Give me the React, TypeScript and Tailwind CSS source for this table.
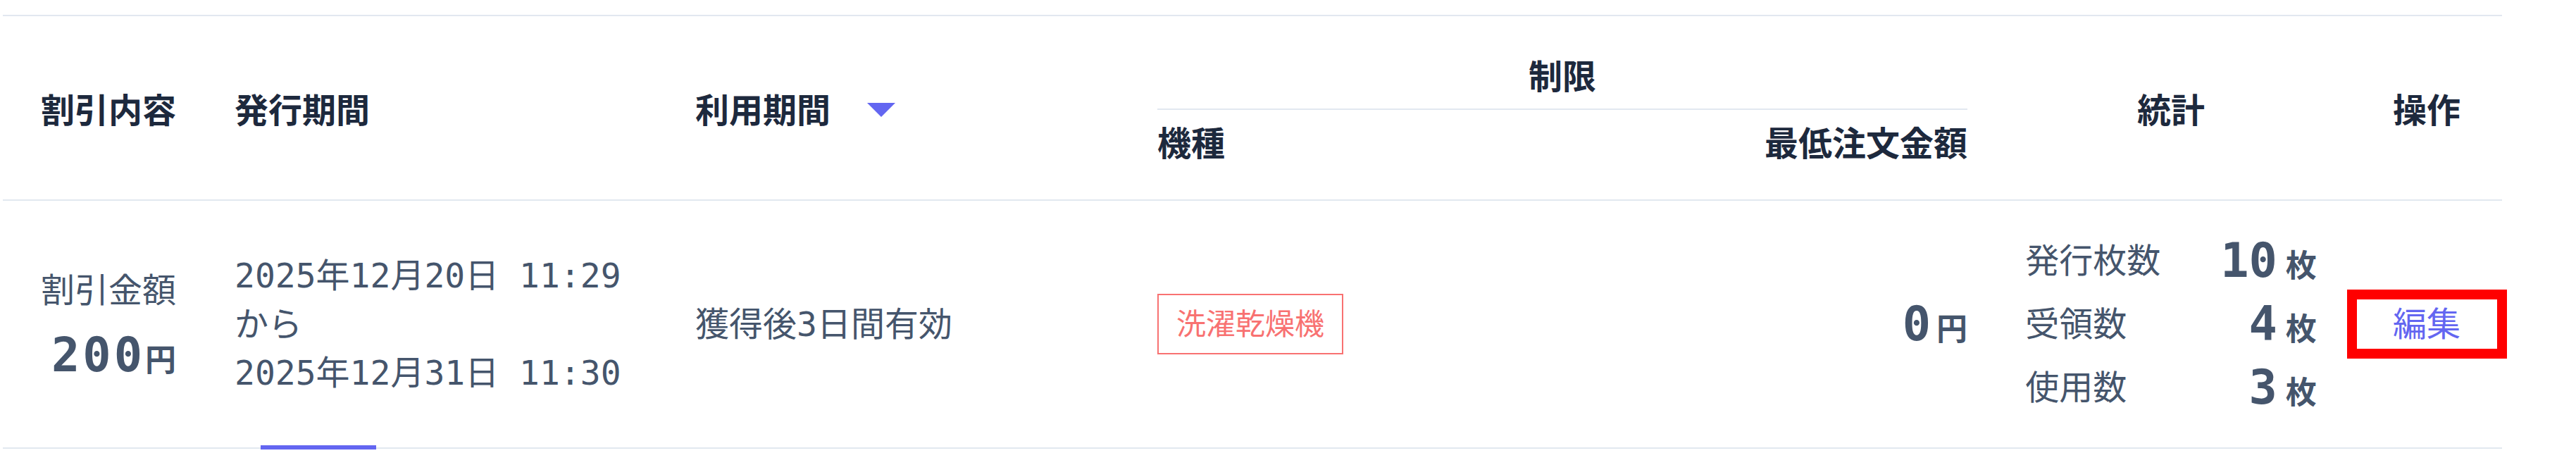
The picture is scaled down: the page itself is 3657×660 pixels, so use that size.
import React from 'react';

const cols = 'grid grid-cols-[286px_660px_660px_590px_626px_512px_214px]';

const stats = [
    { label: '発行枚数', value: '10' },
    { label: '受領数', value: '4' },
    { label: '使用数', value: '3' },
];

const Amount: React.FC<{ value: string }> = ({ value }) => (
    <span className="inline-flex items-baseline">
        <span className="text-[67px] font-bold leading-[80px]">{value}</span>
        <span className="ml-[8px] text-[44px] font-bold">円</span>
    </span>
);

export default function App() {
    return (
        <div className="min-h-screen bg-white pl-[4px] pt-[21px] font-['DejaVu_Sans_Mono','Noto_Sans_CJK_JP',monospace] text-[48px] text-slate-600">
            <div className="w-[3548px] border-t-2 border-slate-200">
                {/* header */}
                <div className={`${cols} border-b-2 border-slate-200 font-['Noto_Sans_CJK_JP',sans-serif] font-bold leading-[72px] text-slate-800`}>
                    <div className="row-span-2 flex items-center pl-[54px]">割引内容</div>
                    <div className="row-span-2 flex items-center pl-[43px]">発行期間</div>
                    <div className="row-span-2 flex items-center gap-[52px] pl-[37px]">
                        <span>利用期間</span>
                        <span className="mt-[6px] h-0 w-0 border-x-[20px] border-t-[20px] border-x-transparent border-t-[#6366f1]" />
                    </div>
                    <div className="col-span-2 flex h-[133px] items-end px-[33px]">
                        <div className="w-full border-b-2 border-slate-200 pb-[13px] text-center">制限</div>
                    </div>
                    <div className="row-span-2 col-start-6 row-start-1 flex items-center justify-center">統計</div>
                    <div className="row-span-2 col-start-7 row-start-1 flex items-center justify-center">操作</div>
                    <div className="col-start-4 row-start-2 h-[127px] pl-[33px] pt-[8px]">機種</div>
                    <div className="col-start-5 row-start-2 pr-[33px] pt-[8px] text-right">最低注文金額</div>
                </div>

                {/* row */}
                <div className={`${cols} relative h-[352px] items-center border-b-2 border-slate-200`}>
                    <div className="pl-[54px]">
                        <div className="flex w-max flex-col items-end whitespace-nowrap">
                            <span className="leading-[72px]">割引金額</span>
                            <span className="mt-[16px] inline-flex items-baseline tracking-[4px]">
                                <span className="text-[67px] font-bold leading-[80px]">200</span>
                                <span className="text-[44px] font-bold tracking-normal">円</span>
                            </span>
                        </div>
                    </div>
                    <div className="whitespace-pre pl-[43px] leading-[69px]">
                        <div>2025年12月20日 11:29</div>
                        <div>から</div>
                        <div>2025年12月31日 11:30</div>
                    </div>
                    <div className="pl-[37px]">獲得後3日間有効</div>
                    <div className="pl-[33px]">
                        <span className="inline-flex h-[86px] w-[264px] items-center justify-center border-2 border-[#f87171] text-[42px] text-[#f87171]">
                            洗濯乾燥機
                        </span>
                    </div>
                    <div className="flex justify-end pr-[33px]">
                        <Amount value="0" />
                    </div>
                    <div className="flex justify-center">
                        <div className="grid grid-cols-[192px_auto] gap-x-[85px]">
                            {stats.map((s) => (
                                <React.Fragment key={s.label}>
                                    <div className="flex h-[90px] items-center">{s.label}</div>
                                    <div className="flex h-[90px] items-center justify-end">
                                        <span className="inline-flex items-baseline">
                                            <span className="text-[67px] font-bold leading-[80px]">{s.value}</span>
                                            <span className="ml-[12px] text-[44px] font-bold">枚</span>
                                        </span>
                                    </div>
                                </React.Fragment>
                            ))}
                        </div>
                    </div>
                    <div className="flex justify-center">
                        <button className="flex h-[98px] w-[227px] shrink-0 items-center justify-center border-[14px] border-[#ff0000] text-[48px] text-[#6366f1]">
                            編集
                        </button>
                    </div>
                    <span className="absolute bottom-[-3px] left-[366px] h-[6px] w-[164px] bg-[#6366f1]" />
                </div>
            </div>
        </div>
    );
}
